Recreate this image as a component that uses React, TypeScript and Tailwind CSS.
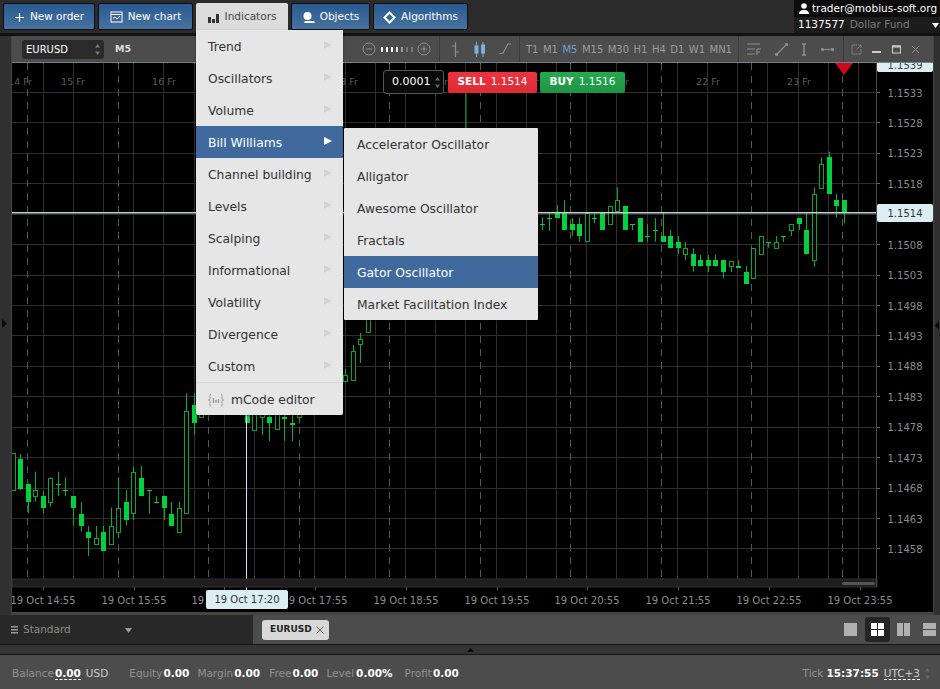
import React from "react";

type C = [number, number, number, number, number, number];
const z5: C[] = [
  [40, 220, 330, 220, 330, 1], [60, 222, 330, 238, 328, 0], [83, 310, 400, 312, 367, 0], [105, 275, 365, 330, 347, 1],
  [128, 335, 400, 348, 383, 0], [151, 292, 380, 293, 365, 1], [174, 275, 348, 312, 315, 0], [196, 292, 348, 329, 333, 0],
  [219, 348, 437, 348, 383, 0], [242, 367, 455, 402, 437, 0], [264, 438, 528, 456, 474, 0], [287, 438, 492, 475, 492, 1],
  [310, 438, 512, 457, 512, 0], [332, 383, 492, 438, 492, 1], [355, 292, 474, 384, 455, 1], [378, 330, 437, 366, 420, 0],
  [400, 260, 420, 275, 400, 1], [423, 258, 348, 293, 348, 0], [446, 329, 400, 329, 333, 0], [468, 348, 370, 366, 370, 0],
  [491, 347, 420, 347, 383, 0], [514, 366, 437, 402, 437, 0], [536, 365, 455, 384, 455, 1], [559, 40, 400, 94, 400, 1],
  [582, 40, 165, 76, 130, 0], [604, 60, 110, 60, 110, 1], [740, 60, 130, 90, 130, 0], [762, 60, 150, 90, 150, 1],
  [785, 60, 165, 90, 112, 1], [807, 90, 183, 112, 130, 0], [830, 60, 148, 90, 148, 1], [852, 90, 183, 112, 116, 0],
  [875, 90, 183, 130, 134, 0], [898, 60, 130, 90, 112, 1],
];
const z6: C[] = [
  [35, 232, 270, 252, 256, 0], [57, 218, 272, 233, 237, 0], [80, 196, 235, 218, 234, 0], [102, 180, 270, 218, 270, 0],
  [125, 234, 288, 252, 270, 0], [148, 233, 305, 252, 287, 0], [171, 218, 304, 218, 304, 1], [193, 218, 250, 234, 238, 0],
  [216, 218, 270, 218, 270, 0], [239, 198, 252, 198, 252, 1], [261, 142, 214, 180, 214, 1], [284, 197, 270, 198, 270, 0],
  [307, 252, 270, 252, 256, 0], [330, 233, 305, 233, 305, 0], [352, 252, 305, 288, 292, 0], [375, 234, 305, 270, 274, 0],
  [398, 218, 305, 288, 305, 0], [420, 270, 325, 288, 324, 0], [443, 288, 342, 306, 324, 0], [465, 306, 360, 325, 342, 1],
  [488, 325, 395, 343, 378, 0], [511, 345, 380, 361, 378, 0], [533, 345, 396, 361, 378, 0], [556, 343, 380, 361, 378, 0],
  [579, 361, 415, 361, 396, 0], [602, 362, 396, 362, 379, 1], [624, 361, 383, 379, 383, 0], [647, 378, 432, 397, 432, 0],
  [669, 325, 413, 325, 413, 1], [692, 288, 343, 288, 343, 1], [715, 306, 323, 306, 310, 0], [738, 288, 325, 307, 325, 1],
  [760, 288, 306, 288, 292, 0], [783, 252, 288, 252, 270, 1], [806, 233, 270, 233, 252, 0], [828, 218, 343, 270, 343, 0],
  [851, 142, 380, 162, 360, 1], [873, 52, 143, 71, 143, 1], [896, 35, 162, 52, 162, 0], [919, 162, 233, 180, 198, 0],
  [941, 180, 250, 180, 216, 0],
];
// [x, wickTop, wickBot, bodyTop, bodyBot, hollow] in page pixels
const extra: C[] = [
  [345, 369, 381, 375, 381, 1], [353, 345, 380, 351, 380, 1], [360, 333, 363, 339, 344, 1], [367.5, 300, 332, 300, 332, 1],
];
const candles: C[] = [
  ...z5.map(([x, a, b, c, d, h]): C => [x / 3, 380 + a / 3, 380 + b / 3, 380 + c / 3, 380 + d / 3, h]),
  ...z6.map(([x, a, b, c, d, h]): C => [530 + x / 3, 140 + a / 3, 140 + b / 3, 140 + c / 3, 140 + d / 3, h]),
  ...extra,
];

const prices = ["1.1533", "1.1528", "1.1523", "1.1518", "1.1513", "1.1508", "1.1503", "1.1498", "1.1493", "1.1488", "1.1483", "1.1478", "1.1473", "1.1468", "1.1463", "1.1458"];
const tf = ["T1", "M1", "M5", "M15", "M30", "H1", "H4", "D1", "W1", "MN1"];
const menu = ["Trend", "Oscillators", "Volume", "Bill Williams", "Channel building", "Levels", "Scalping", "Informational", "Volatility", "Divergence", "Custom"];
const sub = ["Accelerator Oscillator", "Alligator", "Awesome Oscillator", "Fractals", "Gator Oscillator", "Market Facilitation Index"];

function Chart() {
  const solid = Array.from({ length: 28 }, (_, i) => 42.5 + 30.2 * i);
  const dashed = Array.from({ length: 10 }, (_, i) => 27 + 90.55 * i);
  const labelX = [43, 134, 224, 315, 406, 497, 587, 678, 769, 860];
  const labelT = ["14:55", "15:55", "16:55", "17:55", "18:55", "19:55", "20:55", "21:55", "22:55", "23:55"];
  const days: [string, number][] = [["14 Fr", 20], ["15 Fr", 73], ["16 Fr", 164], ["17 Fr", 255], ["18 Fr", 346], ["19 Fr", 436], ["20 Fr", 527], ["21 Fr", 617], ["22 Fr", 708], ["23 Fr", 799]];
  return (
    <svg width="921" height="552" viewBox="12 63 921 552" className="block" fontFamily="'DejaVu Sans', sans-serif">
      <rect x="12" y="63" width="921" height="552" fill="#000" />
      {Array.from({ length: 16 }, (_, i) => (
        <line key={i} x1="12" x2="877" y1={Math.round(92 + 30.43 * i) + 0.5} y2={Math.round(92 + 30.43 * i) + 0.5} stroke="#2e2e2e" />
      ))}
      {solid.map((x) => (
        <line key={x} x1={Math.round(x) + 0.5} x2={Math.round(x) + 0.5} y1="63" y2="579" stroke="#2e2e2e" />
      ))}
      {dashed.map((x) => (
        <line key={x} x1={Math.round(x) + 0.5} x2={Math.round(x) + 0.5} y1="63" y2="579" stroke="#555" strokeDasharray="7 6" />
      ))}
      {days.map(([t, x]) => (
        <text key={t} x={x} y="85" textAnchor="middle" fontSize="9.5" fill="#5c5c5c">{t}</text>
      ))}
      <line x1="466" x2="466" y1="75" y2="130" stroke="#0cab36" />
      {candles.map(([x, a, b, c, d, h], i) => {
        const cx = Math.round(x) + 0.5;
        const top = Math.round(c);
        const hgt = Math.max(1, Math.round(d) - top);
        return (
          <g key={i}>
            <line x1={cx} x2={cx} y1={a} y2={b} stroke="#0cab36" />
            {h ? (
              <rect x={cx - 2} y={top + 0.5} width="4" height={hgt} fill="#000" stroke="#0ca336" />
            ) : (
              <rect x={cx - 2.5} y={top} width="5" height={hgt} fill="#00d23f" />
            )}
          </g>
        );
      })}
      <rect x="12" y="212" width="865" height="1.5" fill="#bfd2d6" />
      <line x1="246.5" x2="246.5" y1="63" y2="592" stroke="#d6e6ea" />
      <polygon points="835,63 853,63 844,75" fill="#d00a1c" />
      <rect x="12" y="579" width="865" height="8" fill="#1e1e1e" stroke="#2e2e2e" />
      <rect x="842" y="582" width="33" height="3" rx="1.5" fill="#555" />
      <line x1="876.5" x2="876.5" y1="63" y2="587" stroke="#4a4a4a" />
      {prices.map((p, i) =>
        p === "1.1513" ? null : (
          <g key={p}>
            <line x1="877" x2="880" y1={Math.round(92 + 30.43 * i) + 0.5} y2={Math.round(92 + 30.43 * i) + 0.5} stroke="#666" />
            <text x="905" y={96.5 + 30.43 * i} textAnchor="middle" fontSize="10" fill="#8c8c8c">{p}</text>
          </g>
        )
      )}
      {labelX.map((x, i) => (
        <g key={x}>
          <line x1={x + 0.5} x2={x + 0.5} y1="587" y2="590" stroke="#555" />
          <text x={x} y="604" textAnchor="middle" fontSize="10" fill="#8c8c8c">{`19 Oct ${labelT[i]}`}</text>
        </g>
      ))}
      <rect x="12" y="612" width="921" height="3" fill="#444" />
    </svg>
  );
}

function Blue({ icon, label, w }: { icon: React.ReactNode; label: string; w: string }) {
  return (
    <div className={`${w} h-[27px] flex items-center justify-center gap-[5px] rounded-[2px] border border-[#0e0e0e] bg-gradient-to-b from-[#2a5a92] to-[#47729f] pt-[1px] text-[10.5px] text-white`}>
      {icon}
      <span>{label}</span>
    </div>
  );
}

function Arrow({ on }: { on?: boolean }) {
  return (
    <svg width="8" height="8" viewBox="0 0 8 8">
      <polygon points="0,0 8,4 0,8" fill={on ? "#fff" : "#d2d2d2"} />
    </svg>
  );
}

function Spin({ c = "#888" }: { c?: string }) {
  return (
    <svg width="5" height="11" viewBox="0 0 5 11">
      <polygon points="2.5,0 5,3.5 0,3.5" fill={c} />
      <polygon points="2.5,11 5,7.5 0,7.5" fill={c} />
    </svg>
  );
}

const tool = { fill: "none", stroke: "#8d8d8d", strokeWidth: 1.2 };

export default function App() {
  return (
    <div className="relative w-[940px] h-[689px] overflow-hidden flex flex-col bg-[#2b2b2b] font-['DejaVu_Sans',sans-serif] text-[12px]">
      {/* top bar */}
      <div className="h-[36px] shrink-0 flex items-start bg-[#2b2b2b] border-b-[3px] border-[#111]">
        <div className="flex items-start gap-[3px] pl-[3px] pt-[3px]">
          <Blue w="w-[92px]" label="New order" icon={
            <svg width="11" height="11" viewBox="0 0 11 11"><path d="M5.5 1v9M1 5.5h9" stroke="#fff" strokeWidth="1.2" /></svg>
          } />
          <Blue w="w-[95px]" label="New chart" icon={
            <svg width="13" height="12" viewBox="0 0 13 12" fill="none" stroke="#fff"><rect x="1" y="1" width="11" height="10" /><path d="M1 3.5h11" /><path d="M3 7.5l2 -1.5 2 2 3 -3" /></svg>
          } />
          <div className="w-[92px] h-[27px] flex items-center justify-center gap-[5px] bg-[#dcdcdc] pt-[1px] text-[10.5px] text-[#444] rounded-t-[2px]">
            <svg width="12" height="11" viewBox="0 0 12 11" fill="#333"><rect x="0" y="5" width="3" height="6" /><rect x="4" y="7" width="3" height="4" /><rect x="8" y="2" width="3" height="9" /></svg>
            <span>Indicators</span>
          </div>
          <Blue w="w-[79px]" label="Objects" icon={
            <svg width="13" height="12" viewBox="0 0 13 12" fill="#fff"><circle cx="5.5" cy="5" r="4" /><path d="M3 10h9l1 2H2z" /></svg>
          } />
          <Blue w="w-[95px]" label="Algorithms" icon={
            <svg width="13" height="13" viewBox="0 0 13 13" fill="none" stroke="#fff" strokeWidth="2"><path d="M6.5 1.5l5 5 -5 5 -5 -5z" /></svg>
          } />
        </div>
        <div className="ml-auto w-[146px] h-[33px] bg-[#0c0c0c] flex flex-col">
          <div className="h-[17px] flex items-center pl-[5px] gap-[3px] whitespace-nowrap text-[10.5px] text-white">
            <svg width="10" height="11" viewBox="0 0 10 11" fill="#fff"><circle cx="5" cy="3" r="2.8" /><path d="M0 11c0-3 2-4 5-4s5 1 5 4z" /></svg>
            <span>trader@mobius-soft.org</span>
          </div>
          <div className="h-[16px] flex items-center pl-[4px] bg-[#1c1c1c] text-[10.5px]">
            <span className="text-white">1137577</span>
            <span className="ml-[5px] text-[#7c7c7c]">Dollar Fund</span>
            <svg className="ml-auto mr-[1px]" width="7" height="5" viewBox="0 0 7 5"><polygon points="0,0 7,0 3.5,5" fill="#fff" /></svg>
          </div>
        </div>
      </div>

      {/* middle */}
      <div className="flex flex-1 min-h-0">
        <div className="w-[12px] shrink-0 bg-[#303030] border-r border-[#444] flex items-center">
          <svg className="ml-[2px] mt-[-4px]" width="5" height="9" viewBox="0 0 5 9"><polygon points="0,0 5,4.5 0,9" fill="#0a0a0a" /></svg>
        </div>
        <div className="w-[921px] flex flex-col">
          <div className="h-[27px] shrink-0 flex bg-[#4c4c4c] border-b border-[#71838a] text-[#9c9c9c]">
            <div className="w-[428px] flex items-center pl-[10px] border-r border-[#3c3c3c]">
              <div className="w-[82px] h-[19px] rounded-[3px] bg-[#2a2a2a] flex items-center justify-between px-[4px] text-[10px] text-white">
                <span>EURUSD</span>
                <Spin c="#777" />
              </div>
              <span className="ml-[11px] text-[9.5px] font-bold text-[#ddd]">M5</span>
              <div className="ml-auto mr-[8px] flex items-center gap-[4px]">
                <svg width="14" height="14" viewBox="0 0 14 14" fill="none" stroke="#8d8d8d"><circle cx="7" cy="7" r="6" /><path d="M4 7h6" /></svg>
                <div className="flex items-center gap-[3px] ml-[1px]">
                  {["#fff", "#fff", "#fff", "#ddd", "#999", "#777", "#777"].map((c, i) => (
                    <span key={i} style={{ background: c }} className="w-[2px] h-[5px]" />
                  ))}
                </div>
                <svg width="14" height="14" viewBox="0 0 14 14" fill="none" stroke="#8d8d8d"><circle cx="7" cy="7" r="6" /><path d="M4 7h6M7 4v6" /></svg>
              </div>
            </div>
            <div className="w-[80px] flex items-center justify-between pl-[11px] pr-[8px] border-r border-[#3c3c3c]">
              <svg width="9" height="15" viewBox="0 0 9 15" {...tool}><path d="M4.5 0v15M1 4h3.5M4.5 10H8" /></svg>
              <svg width="12" height="15" viewBox="0 0 12 15" fill="#7fb0e0" stroke="#7fb0e0"><path d="M2.5 0v15M9 0v15" /><rect x="1" y="4" width="3" height="7" /><rect x="7.5" y="3" width="3" height="8" /></svg>
              <svg width="12" height="12" viewBox="0 0 12 12" {...tool}><path d="M0 11l4 -1L9 1h3" /></svg>
            </div>
            <div className="w-[219px] flex items-center justify-between px-[6px] border-r border-[#3c3c3c] text-[10px]">
              {tf.map((t) => (
                <span key={t} className={t === "M5" ? "text-[#6e9fd2]" : ""}>{t}</span>
              ))}
            </div>
            <div className="w-[105px] flex items-center justify-between pl-[8px] pr-[9px] border-r border-[#3c3c3c]">
              <svg width="14" height="13" viewBox="0 0 14 13" {...tool}><path d="M0 1h13M0 6h8M0 11h8M10 6h4M10 6v6M10 9h3" /></svg>
              <svg width="13" height="13" viewBox="0 0 13 13" {...tool}><path d="M1 12L12 1" /><circle cx="1.5" cy="11.5" r="1" fill="#8d8d8d" /><circle cx="11.5" cy="1.5" r="1" fill="#8d8d8d" /></svg>
              <svg width="6" height="13" viewBox="0 0 6 13" {...tool}><path d="M3 1v11M1 1h4M1 12h4" strokeWidth="1.5" /></svg>
              <svg width="13" height="5" viewBox="0 0 13 5" {...tool}><path d="M1 2.5h11" /><circle cx="1.5" cy="2.5" r="1" fill="#8d8d8d" /><circle cx="11.5" cy="2.5" r="1" fill="#8d8d8d" /></svg>
            </div>
            <div className="flex-1 flex items-center justify-between pl-[7px] pr-[13px]">
              <svg width="11" height="11" viewBox="0 0 11 11" fill="none" stroke="#7a7a7a"><path d="M6 1H1v9h9V5M5 6l5-5M7 1h3v3" /></svg>
              <svg width="9" height="9" viewBox="0 0 9 9"><rect x="0" y="6" width="9" height="2" fill="#ccc" /></svg>
              <svg width="9" height="9" viewBox="0 0 9 9" fill="none" stroke="#ccc"><rect x="0.5" y="1" width="8" height="7" /><path d="M0 1.5h9" strokeWidth="2" /></svg>
              <svg width="9" height="9" viewBox="0 0 9 9" fill="none" stroke="#8d8d8d"><path d="M1 1l7 7M8 1L1 8" /></svg>
            </div>
          </div>
          <div className="relative flex-1 min-h-0">
            <Chart />
            {/* order widget */}
            <div className="absolute left-[371px] top-[7px] flex items-center">
              <div className="w-[61px] h-[24px] rounded-[3px] border border-[#555] bg-[#0a0a0a] flex items-center justify-between pl-[8px] pr-[3px] text-[11px] text-white">
                <span>0.0001</span>
                <Spin c="#666" />
              </div>
              <div className="ml-[4px] w-[89px] h-[21px] rounded-[2px] bg-gradient-to-b from-[#ee3340] to-[#dd2a35] flex items-center justify-center gap-[5px] text-[10.5px] text-white">
                <b>SELL</b><span>1.1514</span>
              </div>
              <div className="ml-[3px] w-[85px] h-[21px] rounded-[2px] bg-gradient-to-b from-[#26aa4e] to-[#1c9442] flex items-center justify-center gap-[5px] text-[10.5px] text-white">
                <b>BUY</b><span>1.1516</span>
              </div>
            </div>
            {/* price tags */}
            <div className="absolute left-[865px] top-0 w-[56px] h-[9px] rounded-b-[2px] bg-[#dbeef3] flex items-center justify-center overflow-hidden text-[10px] text-[#444]">
              <span className="-mt-[5px]">1.1539</span>
            </div>
            <div className="absolute left-[865px] top-[141px] w-[56px] h-[18px] rounded-[2px] bg-[#dbeef3] flex items-center justify-center text-[10px] text-[#333]">
              1.1514
            </div>
            <div className="absolute left-[194px] top-[527px] w-[82px] h-[19px] rounded-[2px] bg-[#dbeef3] flex items-center justify-center text-[10px] text-[#333]">
              19 Oct 17:20
            </div>
          </div>
        </div>
        <div className="flex-1 bg-[#303030] border-l border-[#444] flex items-center">
          <svg className="mt-[-1px] ml-[1px]" width="4" height="9" viewBox="0 0 4 9"><polygon points="4,0 0,4.5 4,9" fill="#0a0a0a" /></svg>
        </div>
      </div>

      {/* tabs */}
      <div className="h-[29px] shrink-0 flex">
        <div className="w-[253px] flex items-center bg-[#282828] pl-[11px] pt-[1px] text-[10.5px] text-[#8c8c8c]">
          <svg width="7" height="8" viewBox="0 0 7 8" fill="#999"><rect width="7" height="1.5" /><rect y="3" width="7" height="1.5" /><rect y="6" width="7" height="1.5" /></svg>
          <span className="ml-[5px]">Standard</span>
          <svg className="ml-[54px]" width="7" height="5" viewBox="0 0 7 5"><polygon points="0,0 7,0 3.5,5" fill="#999" /></svg>
        </div>
        <div className="flex-1 flex items-center bg-[#4c4c4c] pl-[9px]">
          <div className="w-[67px] h-[20px] rounded-[3px] bg-[#d8d8d8] flex items-center justify-between pl-[8px] pr-[5px] text-[9px] font-bold text-[#222]">
            <span>EURUSD</span>
            <svg width="8" height="8" viewBox="0 0 8 8" fill="none" stroke="#666"><path d="M0.5 0.5l7 7M7.5 0.5l-7 7" /></svg>
          </div>
          <div className="ml-auto flex items-center pr-[4px]">
            <span className="w-[13px] h-[13px] bg-[#b0b0b0]" />
            <div className="ml-[8px] w-[25px] h-[25px] rounded-[3px] bg-[#242424] grid grid-cols-2 gap-[1px] p-[6px]">
              <span className="bg-white" /><span className="bg-white" /><span className="bg-white" /><span className="bg-white" />
            </div>
            <div className="ml-[7px] w-[13px] h-[13px] grid grid-cols-2 gap-[1px]">
              <span className="bg-[#b0b0b0]" /><span className="bg-[#b0b0b0]" />
            </div>
            <div className="ml-[13px] w-[13px] h-[13px] grid grid-rows-2 gap-[1px]">
              <span className="bg-[#b0b0b0]" /><span className="bg-[#b0b0b0]" />
            </div>
          </div>
        </div>
      </div>

      {/* splitter */}
      <div className="h-[11px] shrink-0 bg-[#343434] border-y border-[#161616] flex items-center justify-center">
        <svg width="7" height="4" viewBox="0 0 7 4"><polygon points="3.5,0 7,4 0,4" fill="#0a0a0a" /></svg>
      </div>

      {/* status */}
      <div className="h-[34px] shrink-0 flex items-center bg-[#4c4c4c] pl-[12px] pr-[10px] pt-[3px] text-[10.5px] text-[#929292]">
        <span>Balance</span>
        <b className="ml-[1px] text-white border-b border-dashed border-white leading-[12px]">0.00</b>
        <span className="ml-[5px] text-[#ccc]">USD</span>
        <span className="ml-[21px]">Equity</span>
        <b className="ml-[1px] text-white">0.00</b>
        <span className="ml-[8px]">Margin</span>
        <b className="ml-[1px] text-white">0.00</b>
        <span className="ml-[9px]">Free</span>
        <b className="ml-[1px] text-white">0.00</b>
        <span className="ml-[8px]">Level</span>
        <b className="ml-[2px] text-white">0.00%</b>
        <span className="ml-[12px]">Profit</span>
        <b className="ml-[1px] text-white">0.00</b>
        <span className="ml-auto">Tick</span>
        <b className="ml-[3px] text-white">15:37:55</b>
        <span className="ml-[5px] text-[#ccc] border-b border-dashed border-white leading-[12px]">UTC+3</span>
        <span className="ml-[5px]"><Spin c="#666" /></span>
      </div>

      {/* open menu */}
      <div className="absolute left-[196px] top-[30px] w-[147px] bg-[#e6e6e6] rounded-b-[2px] text-[12.3px] text-[#333] shadow-[0_1px_2px_rgba(0,0,0,0.5)]">
        {menu.map((m) => (
          <div key={m} className={`h-[32px] flex items-center justify-between pl-[12px] pr-[11px] pt-[2px] ${m === "Bill Williams" ? "bg-[#406a9e] text-white" : ""}`}>
            <span>{m}</span>
            <span className="-mt-[4px] flex"><Arrow on={m === "Bill Williams"} /></span>
          </div>
        ))}
        <div className="h-[33px] flex items-center pl-[12px] pt-[2px] gap-[7px] border-t border-[#d8d8d8]">
          <svg width="16" height="14" viewBox="0 0 16 14" fill="none" stroke="#999"><path d="M3 1C1.5 1 2 3 2 5S1 7 0.5 7C1 7 2 7 2 9s-.5 4 1 4M13 1c1.5 0 1 2 1 4s1 2 1.5 2c-.5 0-1.500 0-1.500 2s.5 4-1 4" /><path d="M5.500 5v5M8 7v3M10.500 6v4" strokeWidth="1.400" /></svg>
          <span>mCode editor</span>
        </div>
      </div>
      <div className="absolute left-[344px] top-[128px] w-[194px] bg-[#e6e6e6] rounded-[1px] text-[12.3px] text-[#333] shadow-[0_1px_2px_rgba(0,0,0,0.5)]">
        {sub.map((s) => (
          <div key={s} className={`h-[32px] flex items-center pl-[13px] pt-[2px] ${s === "Gator Oscillator" ? "bg-[#406a9e] text-white" : ""}`}>
            {s}
          </div>
        ))}
      </div>
    </div>
  );
}
